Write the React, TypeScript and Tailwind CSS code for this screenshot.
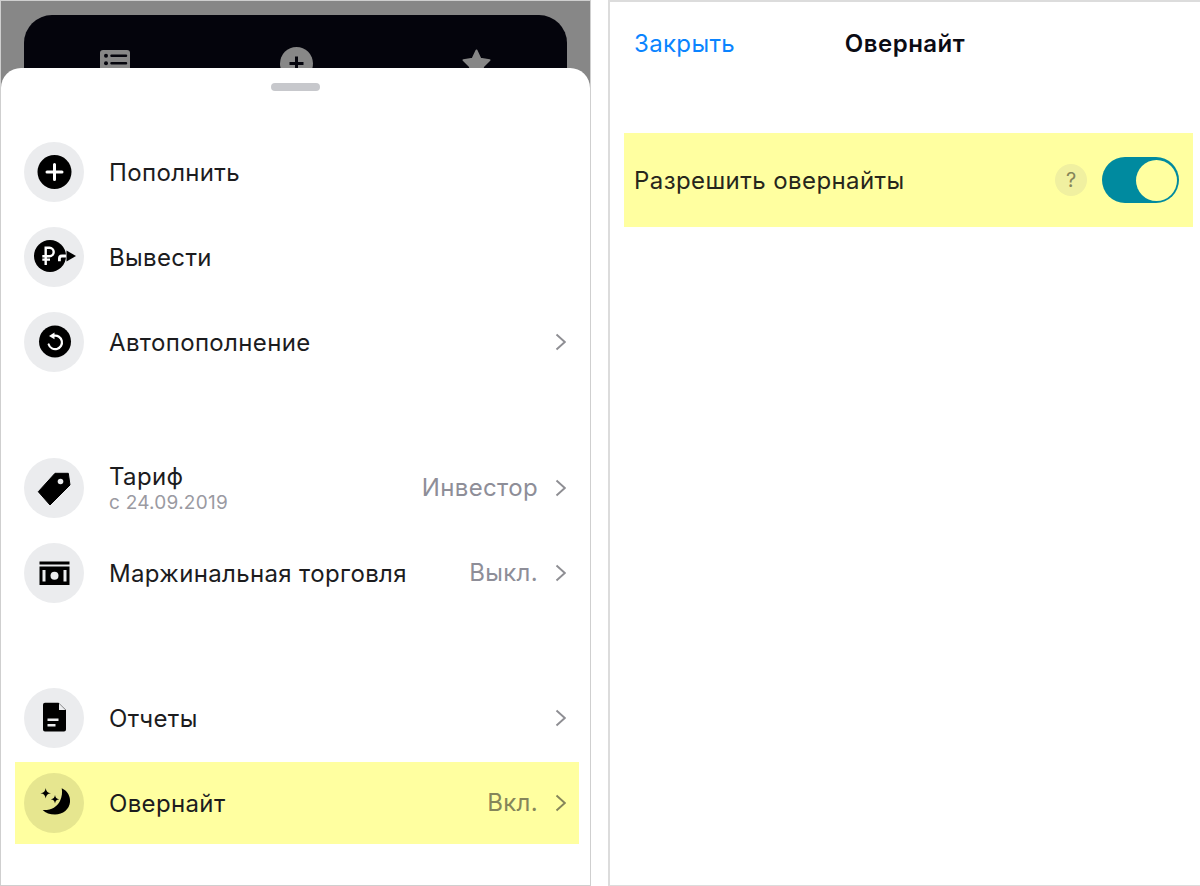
import type { ReactNode } from "react"

const FONT = "font-['Inter','Liberation_Sans',sans-serif]"

function Chevron({ onYellow }: { onYellow?: boolean }) {
  return (
    <svg width="12" height="20" viewBox="0 0 12 20" fill="none" className="ml-[16px] shrink-0">
      <path d="M2.500 2.500 10.800 10l-8.300 7.500" stroke={onYellow ? "#85855a" : "#8e8e93"} strokeWidth="1.900" />
    </svg>
  )
}

const PlusIcon = (
  <svg width="60" height="60" viewBox="0 0 60 60">
    <circle cx="30.500" cy="30" r="17" fill="#000" />
    <path d="M30.500 22.500v15M23 30h15" stroke="#fff" strokeWidth="3" strokeLinecap="round" />
  </svg>
)

const WithdrawIcon = (
  <svg width="60" height="60" viewBox="0 0 60 60">
    <circle cx="26" cy="29" r="16" fill="#000" />
    <path d="M21.700 38V20.800h3.800a4.200 4.200 0 0 1 0 8.400h-7.200M18.300 32.600h7.700" stroke="#fff" strokeWidth="2.400" fill="none" />
    <path d="M44 29h-6a2.600 2.600 0 0 0-2.600 2.600v2.600" stroke="#fff" strokeWidth="2.800" fill="none" />
    <path d="M42.500 23.500 52 29l-9.500 5.500z" fill="#000" />
  </svg>
)

const AutoIcon = (
  <svg width="60" height="60" viewBox="0 0 60 60">
    <circle cx="31" cy="29.500" r="16" fill="#000" />
    <path d="M30 23.700a6.800 6.800 0 1 1-5.300 8.800" stroke="#fff" strokeWidth="2.200" fill="none" strokeLinecap="round" />
    <path d="M30.500 20.500v6.800l-5.500-3.400z" fill="#fff" />
  </svg>
)

const TagIcon = (
  <svg width="60" height="60" viewBox="0 0 60 60">
    <path d="M14.300 33.700 31 15.300h13.300L46 27 26 47z" fill="#000" stroke="#000" strokeLinejoin="round" />
    <circle cx="36.500" cy="23.500" r="2.800" fill="#ebecee" />
  </svg>
)

const MoneyIcon = (
  <svg width="60" height="60" viewBox="0 0 60 60">
    <path d="M15.500 18.500h30v3h-30z" fill="#000" />
    <path fillRule="evenodd" d="M15.500 23.500h30V42h-30zM18.500 27v11.500h3V27zM39.500 27v11.500h3V27z" fill="#000" />
    <circle cx="30.500" cy="32.700" r="4" fill="#ebecee" />
  </svg>
)

const DocIcon = (
  <svg width="60" height="60" viewBox="0 0 60 60">
    <path d="M21 14.700h13.500L42 22v19.500a2 2 0 0 1-2 2H21a2 2 0 0 1-2-2v-24.800a2 2 0 0 1 2-2z" fill="#000" />
    <path d="M35 15.500v6.500h6.500z" fill="#ebecee" />
    <path d="M23.500 31.700h11M23.500 37.300h8" stroke="#ebecee" strokeWidth="2.400" />
  </svg>
)

const MoonIcon = (
  <svg width="60" height="60" viewBox="0 0 60 60">
    <path d="M37.700 15.300C44 18 46.500 24 46 29 45.500 36 39 41.500 31 41.500c-5 0-9.500-1.500-12.300-4.500C27 37.500 33 34 36 28c2-4 2.500-9 1.700-12.700z" fill="#000" />
    <path d="M21.700 15c.7 3.600 1.700 4.600 5.300 5.300-3.600.7-4.600 1.700-5.300 5.300-.7-3.600-1.700-4.600-5.300-5.300 3.600-.7 4.600-1.700 5.300-5.300z" fill="#000" />
    <path d="M31 22c.5 2.800 1.400 3.700 4.200 4.200-2.800.5-3.700 1.400-4.200 4.200-.5-2.800-1.400-3.700-4.200-4.200 2.800-.5 3.700-1.400 4.200-4.200z" fill="#000" />
  </svg>
)

type RowProps = {
  icon: ReactNode
  title: string
  sub?: string
  value?: string
  chevron?: boolean
  highlight?: boolean
}

function Row({ icon, title, sub, value, chevron, highlight }: RowProps) {
  return (
    <div className="h-[85px] pt-px">
      <div className={`flex h-[82px] items-center pl-[9px] pr-[13px] ${highlight ? "bg-[#ffffa0]" : ""}`}>
        <div className={`flex h-[60px] w-[60px] shrink-0 items-center justify-center rounded-full ${highlight ? "bg-[#e6e68f]" : "bg-[#ebecee]"}`}>
          {icon}
        </div>
        <div className="ml-[25px] mt-px min-w-0 flex-1">
          <div className="text-[24px] leading-[29px] tracking-[0.35px] text-[#1c1c1e]">{title}</div>
          {sub && <div className="text-[19px] leading-[24px] tracking-[0.25px] text-[#9a9aa2]">{sub}</div>}
        </div>
        {value && <span className={`text-[24px] tracking-[0.35px] ${highlight ? "text-[#85855a]" : "text-[#8e8e98]"}`}>{value}</span>}
        {chevron && <Chevron onYellow={highlight} />}
      </div>
    </div>
  )
}

function MenuPanel() {
  return (
    <div className="flex h-[886px] w-[591px] flex-col overflow-hidden border border-[#cfcfcf] bg-[#878787]">
      {/* dimmed tab bar behind the sheet */}
      <div className="h-[67px] shrink-0 overflow-hidden px-[23px] pt-[14px]">
        <div className="flex h-[120px] items-start justify-between rounded-[28px] bg-[#04040c] pl-[76px] pr-[76px] pt-[32px]">
          <svg width="30" height="30" viewBox="0 0 30 30" className="mt-[3px]">
            <rect width="30" height="30" rx="3" fill="#878787" />
            <circle cx="6" cy="5.700" r="2" fill="#04040c" />
            <circle cx="6" cy="13.300" r="2" fill="#04040c" />
            <path d="M11.500 5.700h14.500M11.500 13.300h14.500" stroke="#04040c" strokeWidth="2.500" strokeLinecap="round" />
          </svg>
          <svg width="33" height="33" viewBox="0 0 33 33">
            <circle cx="16.500" cy="16.500" r="16.500" fill="#878787" />
            <path d="M16.500 9.500v14M9.500 16.500h14" stroke="#04040c" strokeWidth="3" />
          </svg>
          <svg width="29" height="29" viewBox="0 0 30 30" className="mt-[2px]">
            <path d="M15 1.500l4 8.500 9.500 1.500-7 7L23.500 28 15 23.500 6.500 28l2-9.500-7-7L11 10z" fill="#878787" stroke="#878787" strokeWidth="2" strokeLinejoin="round" />
          </svg>
        </div>
      </div>
      <div className="flex-1 rounded-t-[20px] bg-white pl-[14px] pr-[11px]">
        <div className="flex justify-center pr-[3px] pt-[15px]">
          <div className="h-[8px] w-[49px] rounded-full bg-[#c7c8cc]" />
        </div>
        <div className="mt-[39px]">
          <Row icon={PlusIcon} title="Пополнить" />
          <Row icon={WithdrawIcon} title="Вывести" />
          <Row icon={AutoIcon} title="Автопополнение" chevron />
        </div>
        <div className="mt-[61px]">
          <Row icon={TagIcon} title="Тариф" sub="с 24.09.2019" value="Инвестор" chevron />
          <Row icon={MoneyIcon} title="Маржинальная торговля" value="Выкл." chevron />
        </div>
        <div className="mt-[60px]">
          <Row icon={DocIcon} title="Отчеты" chevron />
          <Row icon={MoonIcon} title="Овернайт" value="Вкл." chevron highlight />
        </div>
      </div>
    </div>
  )
}

function OvernightPanel() {
  return (
    <div className="h-[886px] w-[592px] border-l-2 border-t-2 border-b border-[#dcdcdc] bg-white pl-[14px] pr-[7px]">
      <div className="grid h-[131px] grid-cols-[1fr_auto_1fr] items-start pr-[7px] pt-[26px] text-[24px] leading-[32px]">
        <span className="pl-[10px] tracking-[0.35px] text-[#0a84ff]">Закрыть</span>
        <span className="whitespace-nowrap text-center font-semibold tracking-[0.5px] text-[#0b0b14]">Овернайт</span>
      </div>
      <div className="flex h-[94px] items-center bg-[#ffffa0] pl-[10px] pr-[14px]">
        <span className="mt-[2px] flex-1 text-[24px] tracking-[0.42px] text-[#26261c]">Разрешить овернайты</span>
        <span className="mr-[15px] flex h-[32px] w-[32px] items-center justify-center rounded-full bg-[#f0f0a0] text-[20px] text-[#85855a]">?</span>
        <div className="flex h-[46px] w-[77px] items-center justify-end rounded-full bg-[#008a9f] pr-[2px]">
          <div className="h-[41px] w-[41px] rounded-full bg-[#ffffa0]" />
        </div>
      </div>
    </div>
  )
}

export default function App() {
  return (
    <div className={`flex h-[886px] w-[1200px] justify-between overflow-hidden bg-white ${FONT}`}>
      <MenuPanel />
      <OvernightPanel />
    </div>
  )
}
